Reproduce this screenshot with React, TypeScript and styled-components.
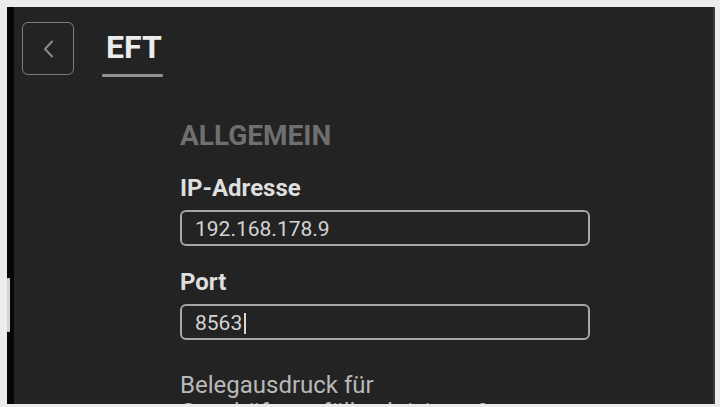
import React from 'react';
import styled, { createGlobalStyle } from 'styled-components';

const GlobalStyle = createGlobalStyle`
  html, body {
    margin: 0;
    padding: 0;
    background: #f1f1f1;
  }
  * {
    box-sizing: border-box;
  }
`;

const Frame = styled.div`
  position: relative;
  width: 720px;
  height: 407px;
  padding: 7px 5px 3px 7px;
  background: #ececec;
  display: flex;
  font-family: Roboto, 'Noto Sans', sans-serif;
`;

const Screen = styled.div`
  flex: 1;
  display: flex;
  flex-direction: column;
  background: #232323;
  border-left: 7px solid #070707;
  border-right: 2px solid #3a3a3a;
  overflow: hidden;
`;

const ScrollHint = styled.div`
  position: absolute;
  left: 7px;
  top: 278px;
  width: 3px;
  height: 54px;
  background: #d6d6d6;
  border-radius: 1px;
`;

const Header = styled.div`
  display: flex;
  align-items: flex-start;
  gap: 28px;
  padding: 15px 0 0 8px;
`;

const BackButton = styled.button`
  width: 52px;
  height: 53px;
  display: flex;
  align-items: center;
  justify-content: center;
  padding: 0;
  background: transparent;
  border: 1.5px solid #7d7d7d;
  border-radius: 6px;
  color: #8a8a8a;
`;

const Tab = styled.div`
  display: flex;
  flex-direction: column;
  align-items: stretch;
  width: 61px;
`;

const TabLabel = styled.span`
  font-size: 32px;
  font-weight: 700;
  line-height: 38px;
  color: #ececec;
  padding: 6px 0 0 4px;
`;

const TabLine = styled.div`
  height: 3px;
  margin-top: 8px;
  background: #929292;
  border-radius: 1px;
`;

const Content = styled.div`
  display: flex;
  flex-direction: column;
  width: 410px;
  margin: 42px 0 0 166px;
`;

const SectionTitle = styled.h2`
  margin: 0 0 22px;
  font-size: 28px;
  line-height: 33px;
  font-weight: 700;
  color: #6f6f6f;
`;

const FieldLabel = styled.label`
  display: block;
  font-size: 24px;
  line-height: 28px;
  font-weight: 700;
  color: #dedede;
  margin-bottom: 8px;
`;

const Field = styled.div<{ $gap: number }>`
  display: flex;
  flex-direction: column;
  margin-bottom: ${(p) => p.$gap}px;
`;

const InputBox = styled.div`
  height: 36px;
  display: flex;
  align-items: center;
  padding: 2px 0 0 13px;
  border: 2px solid #a6a6a6;
  border-radius: 6px;
  font-size: 21px;
  color: #d4d4d4;
`;

const Caret = styled.span`
  display: inline-block;
  width: 1.5px;
  height: 21px;
  margin-left: 2px;
  background: #d8d8d8;
`;

const Description = styled.p`
  margin: 0;
  font-size: 24px;
  line-height: 27px;
  color: #b9b9b9;
`;

const ChevronLeft = () => (
  <svg width="12" height="18" viewBox="0 0 12 18" fill="none">
    <path d="M10 1.5 L3 9 L10 16.5" stroke="currentColor" strokeWidth="2" strokeLinecap="round" strokeLinejoin="round" />
  </svg>
);

const App = () => (
  <Frame>
    <GlobalStyle />
    <Screen>
      <Header>
        <BackButton aria-label="Zurück">
          <ChevronLeft />
        </BackButton>
        <Tab>
          <TabLabel>EFT</TabLabel>
          <TabLine />
        </Tab>
      </Header>
      <Content>
        <SectionTitle>ALLGEMEIN</SectionTitle>
        <Field $gap={22}>
          <FieldLabel>IP-Adresse</FieldLabel>
          <InputBox>192.168.178.9</InputBox>
        </Field>
        <Field $gap={32}>
          <FieldLabel>Port</FieldLabel>
          <InputBox>
            8563
            <Caret />
          </InputBox>
        </Field>
        <Description>
          Belegausdruck für
          <br />
          Geschäftsvorfälle aktivieren?
        </Description>
      </Content>
    </Screen>
    <ScrollHint />
  </Frame>
);

export default App;
